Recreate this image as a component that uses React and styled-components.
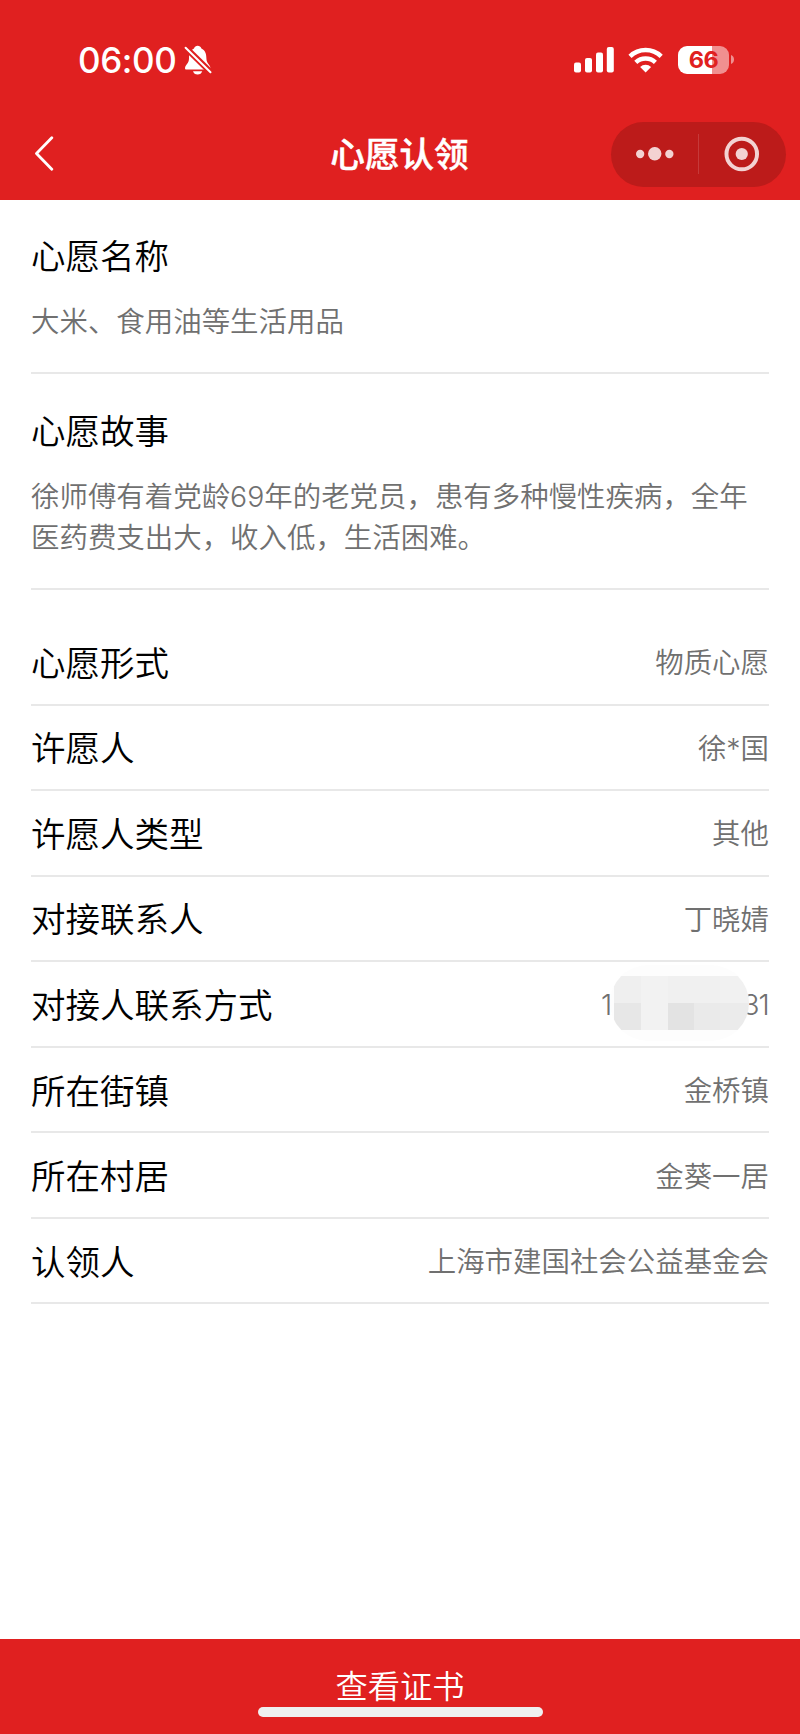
import React from "react";
import styled, { createGlobalStyle } from "styled-components";

const GlobalStyle = createGlobalStyle`
  * {
    box-sizing: border-box;
  }
  body {
    margin: 0;
    background-color: #fff;
    font-family: Inter, "Noto Sans CJK SC", sans-serif;
  }
`;

const details = [
  { label: "心愿形式", value: "物质心愿" },
  { label: "许愿人", value: "徐*国" },
  { label: "许愿人类型", value: "其他" },
  { label: "对接联系人", value: "丁晓婧" },
  { label: "对接人联系方式", masked: true, value: ["1", "31"] },
  { label: "所在街镇", value: "金桥镇" },
  { label: "所在村居", value: "金葵一居" },
  { label: "认领人", value: "上海市建国社会公益基金会" },
];

const mosaic = [
  "#efefef", "#f2f2f2", "#f0f0f0", "#f0f0f0", "#f1f1f1",
  "#e7e7e7", "#f2f2f2", "#e3e3e3", "#eaeaea", "#ebebeb",
];

function StatusBar() {
  return (
    <StatusWrap>
      <Time>06:00</Time>
      <svg className="bell" width="28" height="30" viewBox="0 0 28 30">
        <path
          d="M1 23.2c0-3.3 4-4.500 4-9.700 0-5 1.500-8.500 5-10C10.600 1.600 12 .8 13.700.8s3.100.8 3.700 2.700c3.500 1.500 5 5 5 10 0 5.200 4 6.400 4 9.700 0 .9-.5 1.300-1.400 1.300H2.400C1.500 24.500 1 24.100 1 23.200z"
          fill="#fff"
        />
        <path d="M9 26.300h9.200c-.5 2-2.300 3.300-4.600 3.300S9.500 28.300 9 26.300z" fill="#fff" />
        <path d="M0 1l28 27.500" stroke="#e02020" strokeWidth="6" />
        <path d="M1.600 2.700l24.900 24.600" stroke="#fff" strokeWidth="2" strokeLinecap="round" />
      </svg>
      <svg className="signal" width="40" height="26" viewBox="0 0 40 26" fill="#fff">
        <rect x="0" y="15.500" width="7" height="10" rx="2" />
        <rect x="11" y="11" width="7" height="14.500" rx="2" />
        <rect x="22" y="5.500" width="7" height="20" rx="2" />
        <rect x="32.800" y="0" width="7" height="25.500" rx="2" />
      </svg>
      <svg className="wifi" width="36" height="26" viewBox="0 0 36 26">
        <g fill="none" stroke="#fff" strokeWidth="4.500">
          <path d="M2 9.400a22.500 22.500 0 0 1 31.200 0" />
          <path d="M7.800 15.300a14.400 14.400 0 0 1 19.600 0" />
        </g>
        <path d="M17.600 25.600l-5.500-5.700a8 8 0 0 1 11 0z" fill="#fff" />
      </svg>
      <Battery>
        <span>66</span>
      </Battery>
      <svg className="tip" width="3" height="9" viewBox="0 0 3 9">
        <path d="M0 0c2 .8 3 2.500 3 4.500S2 8.200 0 9z" fill="#f09090" />
      </svg>
    </StatusWrap>
  );
}

function NavBar() {
  return (
    <NavWrap>
      <svg width="20" height="36" viewBox="0 0 20 36">
        <path
          d="M17.800 1.800L2.500 17.500l15.300 15.700"
          fill="none"
          stroke="#fff"
          strokeWidth="2.800"
          strokeLinecap="round"
          strokeLinejoin="round"
        />
      </svg>
      <Title>心愿认领</Title>
      <Capsule>
        <svg width="38" height="14" viewBox="0 0 38 14" fill="#f3d2d2">
          <circle cx="4.200" cy="7" r="4.200" />
          <circle cx="19" cy="6.700" r="6.800" />
          <circle cx="33.800" cy="7" r="4.200" />
        </svg>
        <i />
        <svg width="36" height="36" viewBox="0 0 36 36">
          <circle cx="18" cy="18" r="15.500" fill="none" stroke="#f3d2d2" strokeWidth="4" />
          <circle cx="18" cy="18" r="6.200" fill="#f3d2d2" />
        </svg>
      </Capsule>
    </NavWrap>
  );
}

function MaskedPhone({ parts }) {
  return (
    <Phone>
      <span>{parts[0]}</span>
      <Mask>
        {mosaic.map((color, index) => (
          <Cell key={index} $color={color} />
        ))}
      </Mask>
      <span className="tail">{parts[1]}</span>
    </Phone>
  );
}

function App() {
  return (
    <Screen>
      <GlobalStyle />
      <Header>
        <StatusBar />
        <NavBar />
      </Header>
      <Content>
        <Section $height={174.5}>
          <Label>心愿名称</Label>
          <Text>大米、食用油等生活用品</Text>
        </Section>
        <Section $height={216}>
          <Label>心愿故事</Label>
          <Text>
            徐师傅有着党龄69年的老党员，患有多种慢性疾病，全年医药费支出大，收入低，生活困难。
          </Text>
        </Section>
        <List>
          {details.map((item) => (
            <Row key={item.label}>
              <Label>{item.label}</Label>
              {item.masked ? (
                <MaskedPhone parts={item.value} />
              ) : (
                <Value>{item.value}</Value>
              )}
            </Row>
          ))}
        </List>
      </Content>
      <Footer>
        <CertButton>查看证书</CertButton>
        <HomeBar />
      </Footer>
    </Screen>
  );
}

export default App;

const Screen = styled.div`
  display: flex;
  flex-direction: column;
  width: 800px;
  height: 1734px;
  overflow: hidden;
`;

const Header = styled.header`
  height: 199.500px;
  background-color: #e02020;
  color: #fff;
`;

const StatusWrap = styled.div`
  display: flex;
  align-items: center;
  height: 119px;
  padding-left: 78px;
  .bell {
    margin-left: 6px;
  }
  .signal {
    margin-left: auto;
  }
  .wifi {
    margin-left: 14px;
  }
  .tip {
    margin: 0 66px 0 2px;
  }
`;

const Time = styled.div`
  width: 100px;
  font: 500 35px/40px Inter, sans-serif;
  letter-spacing: -0.400px;
  white-space: nowrap;
`;

const Battery = styled.div`
  width: 51px;
  height: 28px;
  margin-left: 14px;
  border-radius: 9px;
  background: linear-gradient(to right, #fff 34px, #f09090 34px);
  color: #e02020;
  font: 700 23.500px/28px Inter, sans-serif;
  letter-spacing: -0.500px;
  text-align: center;
`;

const NavWrap = styled.div`
  display: grid;
  grid-template-columns: 175px 1fr 176px;
  align-items: center;
  height: 70px;
  padding: 0 13px 0 34px;
`;

const Title = styled.h1`
  margin: 0;
  padding-right: 21px;
  font-size: 34.600px;
  line-height: 48px;
  font-weight: 500;
  -webkit-text-stroke: 0.500px #fff;
  text-align: center;
`;

const Capsule = styled.div`
  display: flex;
  align-items: center;
  width: 175px;
  height: 65px;
  padding: 0 26px 0 25px;
  border-radius: 33px;
  background-color: #bc1b1a;
  i {
    width: 1px;
    height: 40px;
    margin: 0 26px 0 24px;
    background-color: #c63a3a;
  }
`;

const Content = styled.main`
  flex: 1;
  padding: 0 31px;
`;

const Section = styled.section`
  height: ${(props) => props.$height}px;
  padding-top: 33.500px;
  border-bottom: 2px solid #e8e8e8;
`;

const Label = styled.div`
  color: #000;
  font-size: 34.500px;
  line-height: 48px;
  font-weight: 350;
`;

const Text = styled.p`
  margin: 20px 0 0;
  color: #707070;
  font-size: 28.450px;
  line-height: 41px;
  font-weight: 350;
`;

const List = styled.div`
  padding-top: 30px;
`;

const Row = styled.div`
  display: flex;
  align-items: center;
  justify-content: space-between;
  height: 85.550px;
  padding-top: 4px;
  border-bottom: 2px solid #e8e8e8;
`;

const Value = styled.div`
  margin-top: -2px;
  color: #707070;
  font-size: 28.450px;
  line-height: 41px;
  font-weight: 350;
`;

const Phone = styled(Value)`
  display: flex;
  align-items: center;
  .tail {
    margin-left: -7px;
    letter-spacing: -0.800px;
  }
`;

const Mask = styled.div`
  display: grid;
  grid-template-columns: 27px 27px 26px 26px 30px;
  grid-template-rows: 27px 27px;
  align-content: center;
  z-index: 1;
  width: 139px;
  height: 76px;
  margin: -3px 0 0 -2px;
  padding-left: 4px;
  border-radius: 38px;
  overflow: hidden;
  background-color: #fdfdfd;
`;

const Cell = styled.div`
  background-color: ${(props) => props.$color};
`;

const Footer = styled.footer`
  height: 95.500px;
  padding-top: 25px;
  background-color: #e02020;
`;

const CertButton = styled.button`
  display: block;
  width: 100%;
  height: 43px;
  padding: 0;
  border: none;
  background: none;
  color: #fff;
  font-family: inherit;
  font-size: 32.300px;
  line-height: 46px;
  font-weight: 350;
`;

const HomeBar = styled.div`
  width: 285px;
  height: 10px;
  margin: 0 auto;
  border-radius: 5px;
  background-color: #efefef;
`;
